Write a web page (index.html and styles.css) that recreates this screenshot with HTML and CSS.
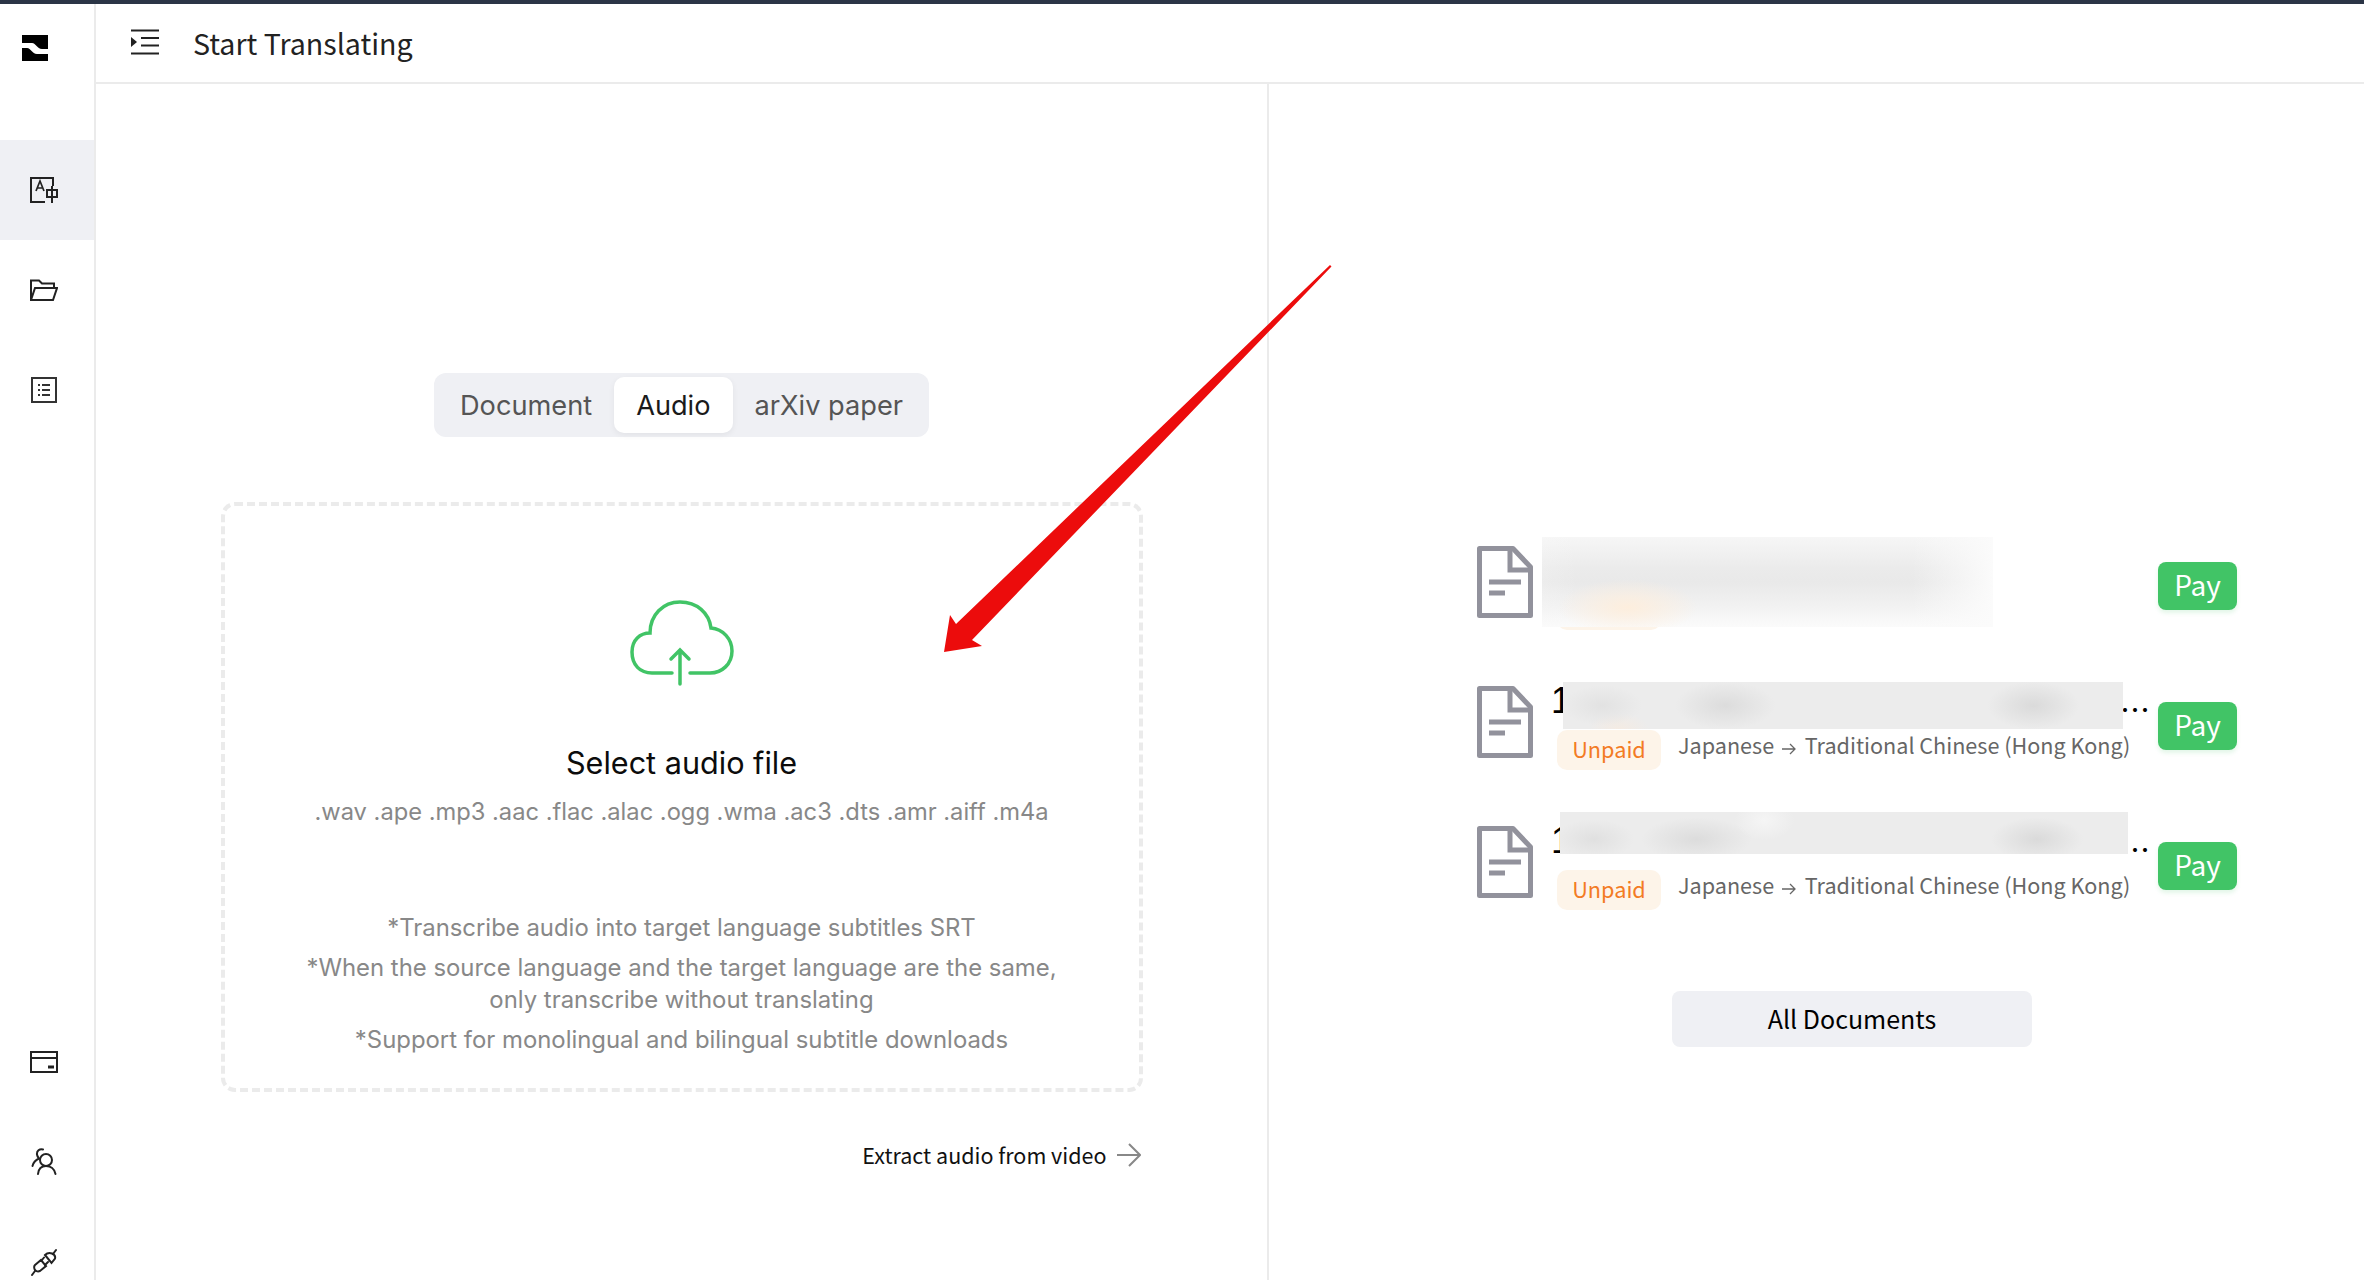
FILE: index.html
```html
<!DOCTYPE html>
<html lang="en">
<head>
<meta charset="utf-8">
<title>Start Translating</title>
<link rel="stylesheet" href="styles.css">
</head>
<body>
<div class="topline"></div>
<div class="app">
  <aside class="sidebar">
    <div class="logo">
      <svg width="26" height="26" viewBox="0 0 26 26"><path d="M0 0H26V14H20C15 14 14 8 10 8H0Z" fill="#000"/><path d="M0 13H5C9 13 10 19 15 19H26V26H0Z" fill="#000"/></svg>
    </div>
    <div class="nav-item active">
      <svg width="28" height="26" viewBox="0 0 28 26" fill="none" stroke="#222" stroke-width="2"><path d="M23 9V1H1V25H15"/><path d="M6 14L10 4L14 14M7.500 11H12.500" stroke-width="1.700"/><path d="M17 13H27V20H17ZM22 9V26"/></svg>
    </div>
    <div class="nav-item">
      <svg width="28" height="22" viewBox="0 0 28 22" fill="none" stroke="#222" stroke-width="2"><path d="M1 21V1.500H9L12 4.500H24V8"/><path d="M1 21H23L27 9H5Z"/></svg>
    </div>
    <div class="nav-item">
      <svg width="26" height="26" viewBox="0 0 26 26" fill="none" stroke="#333" stroke-width="2"><rect x="1" y="1" width="24" height="24"/><path d="M11 8H19M11 13H19M11 18H19M7 8H9M7 13H9M7 18H9"/></svg>
    </div>
    <div class="nav-bottom">
      <div class="nav-item">
        <svg width="28" height="22" viewBox="0 0 28 22" fill="none" stroke="#222" stroke-width="2"><rect x="1" y="1" width="26" height="20"/><path d="M1 7H27"/><path d="M18 16H24" stroke-width="3"/></svg>
      </div>
      <div class="nav-item">
        <svg width="26" height="28" viewBox="0 0 26 28" fill="none" stroke="#222" stroke-width="2" stroke-linecap="round"><circle cx="15" cy="12" r="6"/><path d="M7 26C7.500 21 10.500 18 15 18C19.500 18 23.500 21 24.500 26"/><path d="M12 1.500C8.500 0.500 5.500 3 6 6.500C6.300 8.500 7 9.500 8 10.500C4.500 12 2.500 14 1.500 18"/></svg>
      </div>
      <div class="nav-item">
        <svg width="26" height="28" viewBox="0 0 26 28" fill="none" stroke="#222" stroke-width="2" stroke-linecap="round"><path d="M14 7L20.500 15L24 10.500C24.500 8.500 23.500 6.500 21 5.500C18.500 4.500 16 5 14 7Z"/><path d="M22 6L25 2"/><path d="M4 17L10 12L15 18L9 23C6.500 24 4 23 3.500 21C3 19.500 3 18 4 17Z"/><path d="M4 23L1 27M11 12L13 9.500M14 17L17 14"/></svg>
      </div>
    </div>
  </aside>
  <div class="body">
    <header class="header">
      <svg class="menu-icon" width="30" height="26" viewBox="0 0 30 26" fill="none" stroke="#222" stroke-width="2"><path d="M1 1.500H29M11 9H29M11 16.500H29M1 24.500H29"/><path d="M1 8V18L7 13Z" fill="#222" stroke="none"/></svg>
      <h1 class="title">Start Translating</h1>
    </header>
    <main class="columns">
      <section class="left">
        <div class="tabs">
          <div class="tab">Document</div>
          <div class="tab selected">Audio</div>
          <div class="tab">arXiv paper</div>
        </div>
        <div class="drop">
          <svg class="cloud" width="104" height="86" viewBox="0 0 104 86" fill="none" stroke="#41c466" stroke-width="3.500" stroke-linecap="round"><path d="M42 73H22C10 73 2 65 2 52C2 40 10 33 20 33C20 15 33 2 50 2C67 2 79 13 81 28C93 29 102 39 102 51C102 64 92 73 80 73H60"/><path d="M50 84V50M41 59L50 50L59 59"/></svg>
          <h2 class="drop-title">Select audio file</h2>
          <p class="formats">.wav .ape .mp3 .aac .flac .alac .ogg .wma .ac3 .dts .amr .aiff .m4a</p>
          <div class="notes">
            <p>*Transcribe audio into target language subtitles SRT</p>
            <p>*When the source language and the target language are the same,<br>only transcribe without translating</p>
            <p>*Support for monolingual and bilingual subtitle downloads</p>
          </div>
        </div>
        <div class="extract">
          <span>Extract audio from video</span>
          <svg width="24" height="24" viewBox="0 0 24 24" fill="none" stroke="#888" stroke-width="2"><path d="M0 12H23M12 1L23 12L12 23"/></svg>
        </div>
      </section>
      <section class="right">
        <div class="doc">
          <svg class="doc-icon" width="56" height="72" viewBox="0 0 56 72" fill="none" stroke="#92929c" stroke-width="5"><path d="M2.500 2.500H36L53.500 21V69.500H2.500Z" stroke-linejoin="round"/><path d="M33 2.500V24H53"/><path d="M12 36H44M12 47H28"/></svg>
          <div class="doc-main">
            <div class="doc-name"></div>
            <div class="doc-meta"><span class="chip">Unpaid</span></div>
          </div>
          <button class="pay">Pay</button>
          <div class="blur blur-a"></div>
        </div>
        <div class="doc">
          <svg class="doc-icon" width="56" height="72" viewBox="0 0 56 72" fill="none" stroke="#92929c" stroke-width="5"><path d="M2.500 2.500H36L53.500 21V69.500H2.500Z" stroke-linejoin="round"/><path d="M33 2.500V24H53"/><path d="M12 36H44M12 47H28"/></svg>
          <div class="doc-main">
            <div class="doc-name"><span class="num">1</span><span class="dots">…</span></div>
            <div class="doc-meta"><span class="chip">Unpaid</span><span class="lang">Japanese <svg class="lang-arrow" width="14" height="12" viewBox="0 0 14 12" fill="none" stroke="#666" stroke-width="1.300"><path d="M0 6H13M8 1L13 6L8 11"/></svg> Traditional Chinese (Hong Kong)</span></div>
          </div>
          <button class="pay">Pay</button>
          <div class="blur blur-b"></div>
        </div>
        <div class="doc">
          <svg class="doc-icon" width="56" height="72" viewBox="0 0 56 72" fill="none" stroke="#92929c" stroke-width="5"><path d="M2.500 2.500H36L53.500 21V69.500H2.500Z" stroke-linejoin="round"/><path d="M33 2.500V24H53"/><path d="M12 36H44M12 47H28"/></svg>
          <div class="doc-main">
            <div class="doc-name"><span class="num">1</span><span class="dots">…</span></div>
            <div class="doc-meta"><span class="chip">Unpaid</span><span class="lang">Japanese <svg class="lang-arrow" width="14" height="12" viewBox="0 0 14 12" fill="none" stroke="#666" stroke-width="1.300"><path d="M0 6H13M8 1L13 6L8 11"/></svg> Traditional Chinese (Hong Kong)</span></div>
          </div>
          <button class="pay">Pay</button>
          <div class="blur blur-c"></div>
        </div>
        <button class="all-docs">All Documents</button>
      </section>
    </main>
  </div>
</div>
<svg class="red-arrow" width="400" height="400" viewBox="0 0 400 400"><polygon points="387,0 388.500,1.500 29,375 39,381 1,387 7,350 13,359" fill="#ec0c0c"/></svg>
</body>
</html>
```
FILE: styles.css
```css
* { box-sizing: border-box; }
html, body { margin: 0; padding: 0; height: 1280px; overflow: hidden; background: #fff; }
body { font-family: "Noto Sans CJK SC", "Noto Sans", sans-serif; color: #111; position: relative; }
h1, h2, p { margin: 0; font-weight: 400; }
button { font-family: inherit; border: 0; cursor: pointer; }

.topline { height: 4px; background: #2b3546; }
.app { display: flex; height: 1276px; }

.sidebar { width: 96px; flex: none; border-right: 2px solid #ebebeb; display: flex; flex-direction: column; }
.logo { height: 136px; padding: 31px 0 0 22px; }
.logo svg { display: block; }
.nav-item { height: 100px; padding-right: 6px; display: flex; align-items: center; justify-content: center; }
.nav-item.active { background: #eff0f4; }
.nav-bottom { margin-top: auto; margin-bottom: -32px; }

.body { flex: 1; display: flex; flex-direction: column; min-width: 0; }
.header { height: 80px; flex: none; border-bottom: 2px solid #ebebeb; display: flex; align-items: center; padding: 0 0 2px 34px; }
.menu-icon { margin-right: 33px; }
.title { font-size: 28.6px; color: #222; }

.columns { flex: 1; display: flex; min-height: 0; }
.left { width: 1173px; flex: none; border-right: 2px solid #ebebeb; padding-top: 289px; display: flex; flex-direction: column; align-items: center; }
.tabs { display: flex; height: 64px; padding: 4px; background: #eff0f4; border-radius: 12px; font-family: Inter, sans-serif; font-size: 27.2px; color: #555; }
.tab { padding: 0 22px; display: flex; align-items: center; border-radius: 10px; }
.tab.selected { background: #fff; color: #1a1a1a; box-shadow: 0 2px 6px rgba(0,0,0,.06); }

.drop { width: 922px; height: 590px; margin-top: 65px; border: 4px dashed #ebebeb; border-radius: 14px; display: flex; flex-direction: column; align-items: center; padding-top: 94px; font-family: Inter, sans-serif; text-align: center; }
.cloud { display: block; flex: none; }
.drop-title { font-size: 30.6px; line-height: 40px; margin-top: 57px; color: #0c0c0c; }
.formats { font-size: 23.7px; line-height: 32px; margin-top: 13px; color: #888; }
.notes { margin-top: 84px; font-size: 23.9px; line-height: 32px; color: #888; display: flex; flex-direction: column; gap: 8px; }
.extract { width: 922px; margin-top: 47px; padding-right: 2px; display: flex; justify-content: flex-end; align-items: center; gap: 10px; font-size: 21.5px; color: #111; }

.right { flex: 1; padding: 462px 0 0 208px; display: flex; flex-direction: column; align-items: flex-start; }
.doc { position: relative; width: 760px; height: 84px; margin-bottom: 56px; display: flex; align-items: flex-start; }
.doc-icon { flex: none; margin-right: 24px; }
.doc-main { width: 593px; flex: none; }
.doc-name { height: 44px; color: #000; display: flex; justify-content: space-between; align-items: flex-start; }
.num { margin-left: -6px; font-family: "Liberation Sans", sans-serif; font-size: 36px; line-height: 29px; }
.dots { font-size: 30px; line-height: 44px; }
.doc-meta { display: flex; align-items: flex-start; }
.chip { flex: none; width: 104px; height: 40px; line-height: 38px; text-align: center; background: #fdf4e9; color: #f37b24; font-size: 21.7px; border-radius: 10px; }
.lang { flex: none; margin-left: 17px; font-size: 21.6px; line-height: 30px; color: #666; white-space: nowrap; }
.lang-arrow { vertical-align: -1px; margin: 0 3.5px; }
.pay { flex: none; width: 79px; height: 48px; margin: 16px 0 0 8px; padding: 0 0 4px; background: #41c466; color: #fff; font-size: 28px; line-height: 44px; border-radius: 8px; box-shadow: 0 3px 4px rgba(65,196,102,.15); }
.blur { position: absolute; }
.blur-a { left: 65px; top: -9px; width: 451px; height: 90px; background:
  radial-gradient(ellipse 70px 28px at 19% 78%, #fdeedd, rgba(253,238,221,0)),
  linear-gradient(90deg, rgba(250,250,250,.2) 0, rgba(250,250,250,0) 8%, rgba(250,250,250,0) 82%, #fbfbfb 100%),
  linear-gradient(180deg, #f6f6f6, #ebebeb 35%, #e9e9e9 50%, #f1f1f1 75%, #fbfbfb); }
.blur-b { left: 86px; top: -4px; width: 560px; height: 47px; background:
  radial-gradient(ellipse 50px 24px at 29% 50%, #dcdcdc, rgba(220,220,220,0)),
  radial-gradient(ellipse 46px 24px at 84% 50%, #dadada, rgba(218,218,218,0)),
  radial-gradient(ellipse 40px 20px at 7% 50%, #e2e2e2, rgba(226,226,226,0)),
  radial-gradient(ellipse 30px 16px at 10% 100%, #f4ebe3, rgba(244,235,227,0)),
  #ececec; }
.blur-c { left: 83px; top: -14px; width: 568px; height: 42px; background:
  radial-gradient(ellipse 55px 22px at 24% 65%, #dcdcdc, rgba(220,220,220,0)),
  radial-gradient(ellipse 46px 22px at 84% 65%, #dadada, rgba(218,218,218,0)),
  radial-gradient(ellipse 40px 20px at 6% 65%, #e0e0e0, rgba(224,224,224,0)),
  radial-gradient(ellipse 30px 20px at 36% 20%, #f5f5f5, rgba(245,245,245,0)),
  #ececec; }
.all-docs { width: 360px; height: 56px; margin: 25px 0 0 195px; padding: 0 0 3px; background: #eff0f4; color: #000; font-size: 25px; border-radius: 8px; }

.red-arrow { position: absolute; left: 943px; top: 265px; }
```
